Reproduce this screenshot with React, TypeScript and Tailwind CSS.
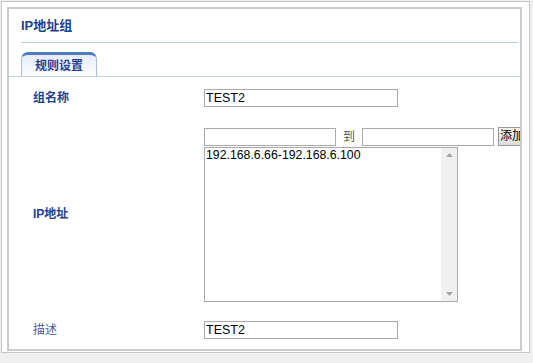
const labelBold = "text-[12px] font-bold text-[#243f8c]";

const TextBox = ({ value, width }: { value?: string; width: string }) => (
  <div
    className={`${width} shrink-0 h-[18px] border border-[#a9a9a9] bg-white px-[1px] text-[12.5px] leading-[16px] text-black`}
  >
    {value}
  </div>
);

const App = () => {
  return (
    <div className="w-[533px] h-[363px] bg-[#efefef] overflow-hidden font-['Liberation_Sans','Noto_Sans_CJK_SC',sans-serif]">
      <div className="ml-[1px] mt-[1px] w-[529px] h-[352px] bg-white border border-[#c6c6c6] pt-[5px] pl-[5px]">
        <div className="w-[515px] h-[344px] border-2 border-[#cbcbcb] overflow-hidden bg-white">
          <div className="pl-[12px] pt-[9px] h-[33px] text-[13px] font-bold text-[#21408d] leading-[16px]">
            IP地址组
          </div>
          <div className="ml-[12px] mr-[2px] h-px bg-[#b9cde0]" />

          {/* tabs */}
          <div className="mt-[9px] flex items-end border-b border-[#c2d4ea] pl-[12px]">
            <div className="w-[76px] h-[24px] rounded-t-[7px] border border-b-0 border-[#a8bfdb] border-t-[3px] border-t-[#4d7cc4] bg-gradient-to-b from-[#e6eef9] to-[#fbfdff] flex items-center justify-center text-[12px] font-bold text-[#243f8c]">
              规则设置
            </div>
          </div>

          {/* form rows */}
          <div className="flex flex-col">
            <div className="flex items-center pt-[12px] h-[29px]">
              <div className={`w-[195px] shrink-0 pl-[24px] ${labelBold}`}>组名称</div>
              <TextBox value="TEST2" width="w-[194px]" />
            </div>

            <div className="flex items-center pt-[21px] h-[195px]">
              <div className={`w-[195px] shrink-0 pl-[24px] ${labelBold}`}>IP地址</div>
              <div className="flex flex-col self-start">
                <div className="flex items-center">
                  <TextBox width="w-[132px]" />
                  <span className="w-[26px] shrink-0 text-center text-[12px] text-[#555555]">到</span>
                  <TextBox width="w-[132px]" />
                  <div className="ml-[4px] h-[19px] w-[30px] shrink-0 border border-[#9a9a9a] bg-gradient-to-b from-[#f4f4f4] to-[#dddddd] text-[12px] leading-[17px] pl-[1px] text-black whitespace-nowrap">
                    添加
                  </div>
                </div>
                <div className="mt-[1px] w-[254px] h-[155px] border border-[#a9a9a9] flex">
                  <div className="flex-1 pl-[1px] text-[12.3px] leading-[15px] text-black">
                    192.168.6.66-192.168.6.100
                  </div>
                  <div className="w-[16px] bg-[#f0f0f0] flex flex-col items-center justify-between py-[5px]">
                    <svg width="7" height="4" viewBox="0 0 7 4">
                      <path d="M0 4 L3.5 0 L7 4 Z" fill="#a3a3a3" />
                    </svg>
                    <svg width="7" height="4" viewBox="0 0 7 4">
                      <path d="M0 0 L3.5 4 L7 0 Z" fill="#a3a3a3" />
                    </svg>
                  </div>
                </div>
              </div>
            </div>

            <div className="flex items-center pt-[20px]">
              <div className="w-[195px] shrink-0 pl-[24px] text-[12px] text-[#4a5c9a]">描述</div>
              <TextBox value="TEST2" width="w-[194px]" />
            </div>
          </div>
        </div>
      </div>
    </div>
  );
};

export default App;
